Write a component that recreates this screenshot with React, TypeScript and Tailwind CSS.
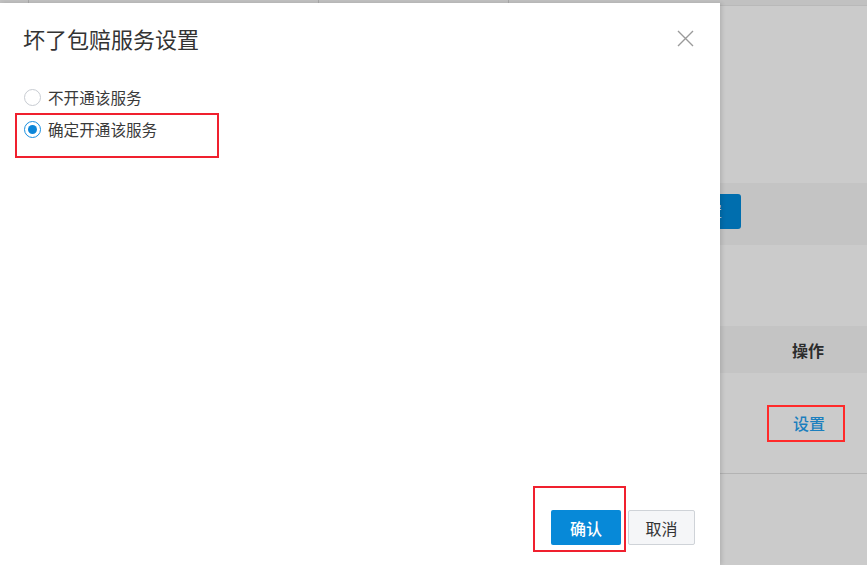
import React, { useState } from "react";

const cjk = { fontFamily: '"Noto Sans CJK SC", "Noto Sans", sans-serif' };

const options = [
  { id: "off", label: "不开通该服务" },
  { id: "on", label: "确定开通该服务" },
];

const Radio = ({ checked }: { checked: boolean }) => (
  <span
    className={`flex h-[17px] w-[17px] items-center justify-center rounded-full border bg-white ${
      checked ? "border-[#1a8fe0]" : "border-[#c8ccd2]"
    }`}
  >
    {checked && <span className="h-[9px] w-[9px] rounded-full bg-[#0b86d9]" />}
  </span>
);

// the page behind the modal, already dimmed by the overlay
const BackgroundPage = () => (
  <div className="flex h-full flex-col bg-[#cbcbcb]">
    <div className="flex h-[6px] border-b border-[#b9b9b9] bg-[#c1c1c1]">
      <div className="w-[28px]" />
      <div className="w-[290px] border-l border-[#a8a8a8]" />
      <div className="w-[190px] border-l border-[#a8a8a8]" />
      <div className="flex-1 border-l border-[#a8a8a8]" />
    </div>
    <div className="h-[177px]" />
    <div className="flex h-[62px] items-start bg-[#c4c4c4] pt-[11px]">
      <div className="ml-[640px] flex h-[35px] w-[101px] items-center justify-end rounded-[3px] bg-[#006eae] pr-[19px] text-[15px] text-[#cfe0ec]">
        批量设置
      </div>
    </div>
    <div className="h-[81px]" />
    <div className="flex h-[47px] items-center justify-end bg-[#c4c4c4] pr-[9px]">
      <div className="w-[100px] text-center text-[16px] font-bold text-[#2c2c2c]">操作</div>
    </div>
    <div className="flex h-[101px] items-center justify-end border-b border-[#b3b3b3] pr-[22px]">
      <span className="flex h-[37px] w-[78px] items-center justify-center border-2 border-[#ff2a2a] pl-[6px] text-[16px] font-medium text-[#1b7fbe]">
        设置
      </span>
    </div>
  </div>
);

export default function App() {
  const [value, setValue] = useState("on");

  return (
    <div className="relative h-[565px] w-[867px] overflow-hidden" style={cjk}>
      <BackgroundPage />

      {/* Modal */}
      <div className="absolute bottom-0 left-0 top-[3px] flex w-[720px] flex-col bg-white shadow-[2px_0_4px_rgba(0,0,0,0.12)]">
        <div className="flex items-center justify-between pl-[23px] pr-[26px] pt-[19px]">
          <h2 className="text-[22px] leading-[32px] text-[#333]">坏了包赔服务设置</h2>
          <svg width="17" height="17" viewBox="0 0 17 17" className="text-[#9a9a9a]">
            <path d="M1 1L16 16M16 1L1 16" stroke="currentColor" strokeWidth="1.4" fill="none" />
          </svg>
        </div>

        <div className="mt-[34px] flex flex-col gap-[14px] pl-[24px]">
          {options.map((o) => (
            <label key={o.id} className="relative flex cursor-pointer items-center gap-[7px]" onClick={() => setValue(o.id)}>
              <Radio checked={value === o.id} />
              <span className="text-[15.6px] leading-[18px] text-[#3a3a3a]">{o.label}</span>
              {o.id === "on" && (
                <span className="pointer-events-none absolute left-[-9px] top-[-7px] h-[45px] w-[204px] border-2 border-[#f0202e]" />
              )}
            </label>
          ))}
        </div>

        <div className="mt-auto flex justify-end gap-[7px] pb-[20px] pr-[25px]">
          <div className="relative">
            <button className="h-[35px] w-[70px] rounded-[2px] bg-[#0789d8] text-[16px] font-medium text-white">确认</button>
            <span className="pointer-events-none absolute bottom-[-7px] left-[-18px] right-[-5px] top-[-24px] border-2 border-[#f0202e]" />
          </div>
          <button className="h-[35px] w-[67px] rounded-[2px] border border-[#cfd3d8] bg-[#f5f6f8] text-[16px] text-[#333]">
            取消
          </button>
        </div>
      </div>
    </div>
  );
}
